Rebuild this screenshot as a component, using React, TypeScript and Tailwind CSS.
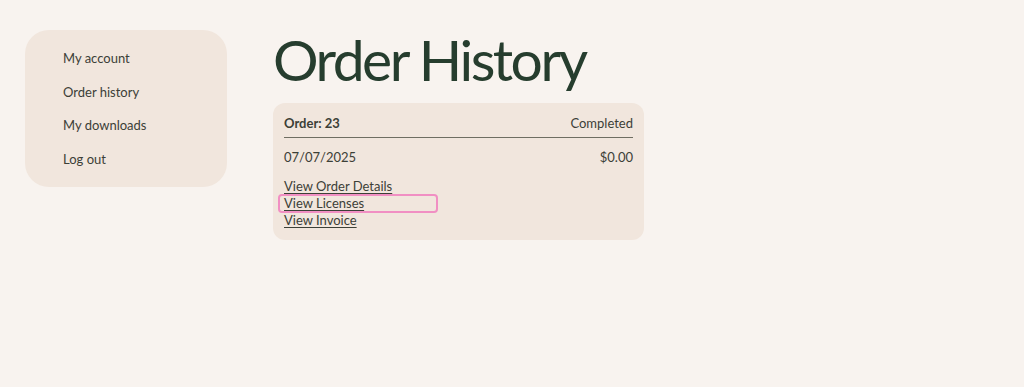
import React from "react";

const menu = ["My account", "Order history", "My downloads", "Log out"];

const OrderCard: React.FC = () => {
  return (
    <div className="w-[371px] rounded-[12px] bg-[#f1e6dd] px-[11px] pt-[12px] pb-[11px] text-[13px] text-[#3c4037]">
      <div className="flex items-center justify-between h-[17px]">
        <span className="font-bold">Order: 23</span>
        <span>Completed</span>
      </div>
      <div className="mt-[5px] h-px bg-[#6f6e62]" />
      <div className="mt-[11px] flex items-center justify-between h-[17px]">
        <span>07/07/2025</span>
        <span>$0.00</span>
      </div>
      <div className="mt-[12px] flex flex-col items-start">
        <a href="#" className="h-[17px] leading-[17px] underline underline-offset-2">
          View Order Details
        </a>
        <a
          href="#"
          className="-mx-[6px] -my-[1px] h-[19px] w-[160px] rounded-[4px] border-2 border-[#f18fc3] px-[4px] leading-[15px] underline underline-offset-2"
        >
          View Licenses
        </a>
        <a href="#" className="h-[17px] leading-[17px] underline underline-offset-2">
          View Invoice
        </a>
      </div>
    </div>
  );
};

export default function App() {
  return (
    <div
      className="min-h-[387px] w-full bg-[#f8f3ef] flex items-start gap-[46px] pl-[25px] pt-[30px]"
      style={{ fontFamily: "Lato, 'Noto Sans', sans-serif" }}
    >
      <nav className="w-[202px] h-[157px] rounded-[24px] bg-[#f1e6dd] pl-[38px] pt-[20px] flex flex-col gap-[16.5px]">
        {menu.map((item) => (
          <a
            key={item}
            href="#"
            className="h-[17px] leading-[17px] text-[13px] text-[#3c4037]"
          >
            {item}
          </a>
        ))}
      </nav>
      <main className="flex flex-col">
        <h1 className="h-[76px] -mt-[3px] leading-[64px] text-[57px] font-normal tracking-[-2.5px] text-[#263d2e]">
          Order History
        </h1>
        <OrderCard />
      </main>
    </div>
  );
}
